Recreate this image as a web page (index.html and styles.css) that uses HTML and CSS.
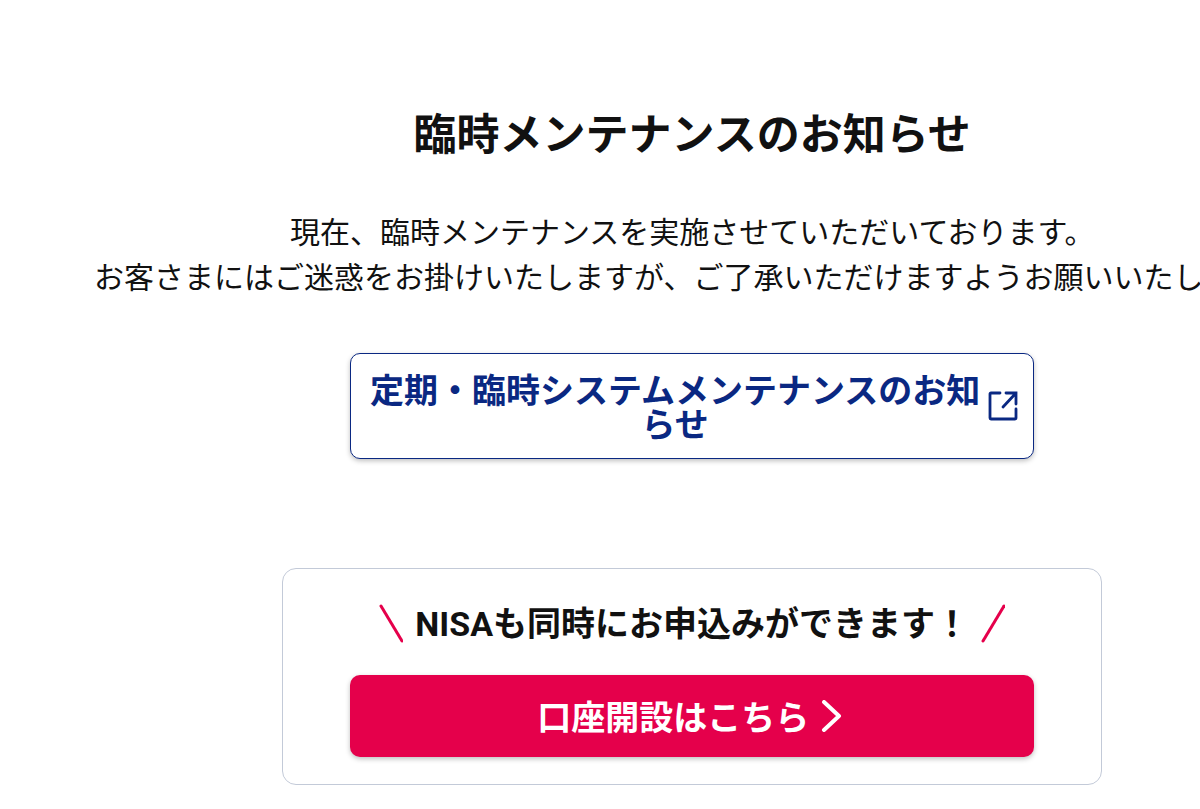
FILE: index.html
```html
<!DOCTYPE html>
<html lang="ja">

<head>
  <meta charset="UTF-8">
  <meta name="viewport" content="width=device-width, initial-scale=1.0">
  <title>臨時メンテナンスのお知らせ</title>
  <link rel="stylesheet" href="styles.css">
</head>

<body>
  <main class="page">
    <h1 class="title">臨時メンテナンスのお知らせ</h1>
    <p class="message">
      現在、臨時メンテナンスを実施させていただいております。<br>
      お客さまにはご迷惑をお掛けいたしますが、ご了承いただけますようお願いいたします。
    </p>

    <a class="button button-outline" href="#">
      <span class="button-label">定期・臨時システムメンテナンスのお知らせ</span>
      <svg class="icon-blank" viewBox="0 0 30 30" aria-hidden="true">
        <path d="M12 2H3Q2 2 2 3V27Q2 28 3 28H27Q28 28 28 27V18M18 2H28V13M28 2L15 16" />
      </svg>
    </a>

    <section class="account">
      <p class="account-lead">
        <svg class="slash" viewBox="0 0 24 38" aria-hidden="true"><path d="M2 1L23 36" /></svg>
        <span>NISAも同時にお申込みができます！</span>
        <svg class="slash" viewBox="0 0 24 38" aria-hidden="true"><path d="M23 1L2 36" /></svg>
      </p>
      <a class="button button-primary" href="#">
        <span class="button-label">口座開設はこちら</span>
        <svg class="icon-arrow" viewBox="0 0 26 32" aria-hidden="true"><path d="M3 2L18 16L3 30" /></svg>
      </a>
    </section>
  </main>
</body>

</html>
```

FILE: styles.css
```css
* {
  box-sizing: border-box;
}

body {
  margin: 0;
  overflow-x: hidden;
  background-color: #fff;
  color: #111;
  font-family: Roboto, "Noto Sans CJK JP", sans-serif;
}

.page {
  display: flex;
  flex-direction: column;
  align-items: center;
  min-width: max-content;
  padding: 103px 94px 24px;
}

.title {
  margin: 0 0 43px;
  font-size: 43px;
  line-height: 64px;
}

.message {
  margin: 0 0 53px;
  font-size: 30px;
  line-height: 45px;
  text-align: center;
  white-space: nowrap;
}

.button {
  display: flex;
  align-items: center;
  justify-content: center;
  width: 684px;
  border-radius: 10px;
  box-shadow: 0 2px 5px rgba(0, 0, 0, 0.25);
  font-size: 34px;
  font-weight: bold;
  line-height: 34px;
  text-align: center;
  text-decoration: none;
}

.button-label {
  padding-top: 4px;
}

.button-outline {
  gap: 4px;
  min-height: 106px;
  padding: 15px;
  border: 1px solid #0a2882;
  background-color: #fff;
  color: #0a2882;
}

.button-primary {
  gap: 12px;
  min-height: 82px;
  background-color: #e5004b;
  color: #fff;
}

.button svg,
.slash {
  flex-shrink: 0;
  fill: none;
  stroke: currentColor;
  stroke-linecap: round;
}

.icon-blank {
  width: 30px;
  height: 30px;
  stroke-width: 2.8;
}

.icon-arrow {
  width: 26px;
  height: 32px;
  stroke-width: 4;
  stroke-linejoin: round;
}

.account {
  display: flex;
  flex-direction: column;
  align-items: center;
  width: 820px;
  margin-top: 109px;
  padding: 30px 0 27px;
  border: 1px solid #c3cad8;
  border-radius: 14px;
}

.account-lead {
  display: flex;
  align-items: center;
  gap: 12px;
  margin: 0 0 26px;
  font-size: 34px;
  font-weight: bold;
  line-height: 50px;
}

.slash {
  width: 24px;
  height: 40px;
  color: #e5004b;
  stroke-width: 3;
}
```
